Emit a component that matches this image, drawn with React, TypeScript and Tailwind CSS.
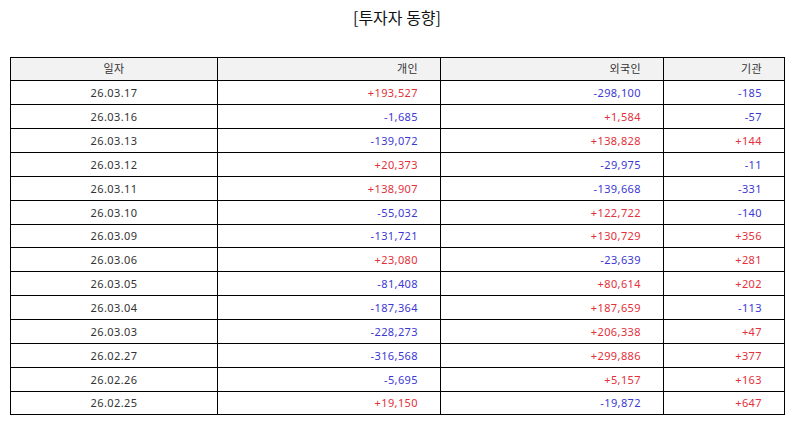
import React from "react";

interface Row {
  date: string;
  person: number;
  foreign: number;
  inst: number;
}

const rows: Row[] = [
  { date: "26.03.17", person: 193527, foreign: -298100, inst: -185 },
  { date: "26.03.16", person: -1685, foreign: 1584, inst: -57 },
  { date: "26.03.13", person: -139072, foreign: 138828, inst: 144 },
  { date: "26.03.12", person: 20373, foreign: -29975, inst: -11 },
  { date: "26.03.11", person: 138907, foreign: -139668, inst: -331 },
  { date: "26.03.10", person: -55032, foreign: 122722, inst: -140 },
  { date: "26.03.09", person: -131721, foreign: 130729, inst: 356 },
  { date: "26.03.06", person: 23080, foreign: -23639, inst: 281 },
  { date: "26.03.05", person: -81408, foreign: 80614, inst: 202 },
  { date: "26.03.04", person: -187364, foreign: 187659, inst: -113 },
  { date: "26.03.03", person: -228273, foreign: 206338, inst: 47 },
  { date: "26.02.27", person: -316568, foreign: 299886, inst: 377 },
  { date: "26.02.26", person: -5695, foreign: 5157, inst: 163 },
  { date: "26.02.25", person: 19150, foreign: -19872, inst: 647 },
];

// Format with sign and thousands separator
const fmt = (n: number) => (n > 0 ? "+" : "-") + Math.abs(n).toLocaleString("en-US");

function NumCell({ value }: { value: number }) {
  return (
    <td
      className={`border border-black text-right pr-[22px] ${
        value > 0 ? "text-[#e3303a]" : "text-[#3c38d4]"
      }`}
    >
      {fmt(value)}
    </td>
  );
}

export default function App() {
  return (
    <div className="w-[794px] h-[425px] bg-white font-['Noto_Sans','Noto_Sans_CJK_KR',sans-serif] text-[#333]">
      <h1 className="pt-[5px] h-[56.5px] text-center text-[16px] text-[#111] font-['Noto_Sans_CJK_KR',sans-serif]">
        [투자자 동향]
      </h1>
      <table className="ml-[10px] w-[775px] border-collapse text-[11px] leading-none tracking-[0.4px]">
        <thead>
          <tr className="h-[23.87px] bg-[#f2f2f2]">
            <th className="w-[207px] border border-black font-normal text-center">일자</th>
            <th className="w-[223px] border border-black font-normal text-right pr-[22px]">개인</th>
            <th className="w-[223px] border border-black font-normal text-right pr-[22px]">외국인</th>
            <th className="border border-black font-normal text-right pr-[22px]">기관</th>
          </tr>
        </thead>
        <tbody>
          {rows.map((r) => (
            <tr key={r.date} className="h-[23.87px]">
              <td className="border border-black text-center">{r.date}</td>
              <NumCell value={r.person} />
              <NumCell value={r.foreign} />
              <NumCell value={r.inst} />
            </tr>
          ))}
        </tbody>
      </table>
    </div>
  );
}
